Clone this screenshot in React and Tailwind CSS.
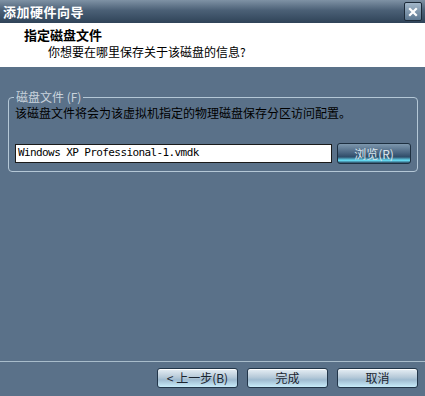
import React from 'react';

const cjk = { fontFamily: '"Noto Sans CJK SC", "Noto Sans", sans-serif' };

function WizardButton({ children, className = '' }) {
  return (
    <button
      type="button"
      className={`h-[20px] w-[81px] rounded-[3px] border border-[#22364a] bg-[linear-gradient(to_bottom,#e6eef4_0%,#b7cad9_45%,#9fbbd0_60%,#c8ecfa_100%)] text-[12px] leading-[18px] text-[#1b2530] shadow-[inset_0_1px_0_#ffffff] ${className}`}
      style={cjk}
    >
      {children}
    </button>
  );
}

export default function App() {
  return (
    <div className="flex h-[396px] w-[425px] flex-col bg-[#5a7189]" style={cjk}>
      {/* title bar */}
      <div className="flex h-[23px] items-center justify-between bg-[linear-gradient(to_bottom,#7f92a5_0%,#4b6076_45%,#2f4358_100%)] pl-[3px] pr-[3px]">
        <span className="text-[13px] font-bold leading-none tracking-[0.5px] text-white">添加硬件向导</span>
        <div className="flex h-[19px] w-[18px] items-center justify-center rounded-[2px] border border-[#1c2a38] bg-[linear-gradient(to_bottom,#a3b7c9,#5d7891)]">
          <svg width="10" height="10" viewBox="0 0 10 10">
            <path d="M2 2 L8 8 M8 2 L2 8" stroke="#ffffff" strokeWidth="2.2" strokeLinecap="square" />
          </svg>
        </div>
      </div>

      {/* header */}
      <div className="flex h-[44px] flex-col bg-white pl-[24px] pt-[4px]">
        <span className="text-[13px] font-bold leading-[16px] text-black">指定磁盘文件</span>
        <span className="pl-[24px] text-[12px] leading-[18px] text-black">你想要在哪里保存关于该磁盘的信息?</span>
      </div>

      {/* body */}
      <div className="flex-1 px-[8px] pt-[22px] pr-[9px]">
        <fieldset className="h-[83px] rounded-[4px] border border-[#b4c7d6] px-[6px]">
          <legend className="ml-[-1px] px-[2px] text-[12px] leading-[16px] text-[#c9d3dc]">磁盘文件 (F)</legend>
          <p className="text-[12px] leading-[16px] text-black">该磁盘文件将会为该虚拟机指定的物理磁盘保存分区访问配置。</p>
          <div className="mt-[22px] flex items-center gap-[5px]">
            <div className="flex h-[19px] w-[317px] items-center border border-[#1a1a1a] bg-white pl-[2px] text-[11px] tracking-[-0.6px] text-black" style={{ fontFamily: '"DejaVu Sans Mono", monospace' }}>
              Windows XP Professional-1.vmdk
            </div>
            <button
              type="button"
              className="h-[21px] w-[74px] rounded-[3px] border border-[#1d2f40] bg-[linear-gradient(to_bottom,#7d97ad_0%,#4b6682_45%,#2f4c69_68%,#66e0f8_86%,#2b4660_100%)] text-[12px] leading-[18px] text-[#dbe6ee]"
              style={cjk}
            >
              浏览(R)
            </button>
          </div>
        </fieldset>
      </div>

      {/* footer */}
      <div className="flex h-[35px] flex-col border-t border-[#a8bccb]">
        <div className="flex justify-end gap-[9px] pr-[7px] pt-[6px]">
          <WizardButton>&lt; 上一步(B)</WizardButton>
          <WizardButton>完成</WizardButton>
          <WizardButton>取消</WizardButton>
        </div>
      </div>
    </div>
  );
}
